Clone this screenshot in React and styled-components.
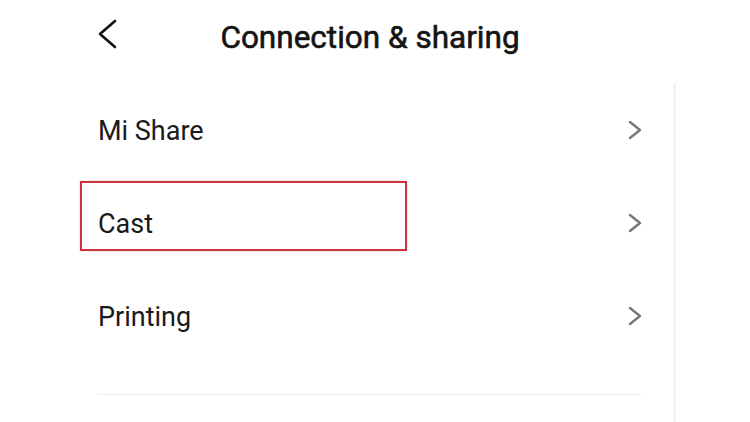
import React from 'react';
import styled, { createGlobalStyle } from 'styled-components';

const GlobalStyle = createGlobalStyle`
  html, body {
    margin: 0;
    padding: 0;
    background: #ffffff;
  }
  body {
    font-family: Roboto, "Noto Sans", "Liberation Sans", sans-serif;
    -webkit-font-smoothing: antialiased;
  }
`;

const Screen = styled('div')`
  width: 750px;
  height: 422px;
  overflow: hidden;
  background: #ffffff;
`;

const Header = styled('header')`
  width: 544px;
  height: 83px;
  margin-left: 98px;
  display: grid;
  grid-template-columns: 1fr auto 1fr;
  align-items: start;
`;

const BackButton = styled('button')`
  width: 24px;
  height: 32px;
  margin-top: 18px;
  padding: 0;
  border: none;
  background: none;
  display: flex;
  align-items: center;
  cursor: pointer;
`;

const Title = styled('h1')`
  margin: 0;
  padding-top: 19px;
  font-size: 31.5px;
  font-weight: 400;
  -webkit-text-stroke: 0.6px #141414;
  line-height: 38px;
  color: #141414;
  letter-spacing: 0;
`;

const Body = styled('div')`
  display: flex;
  align-items: stretch;
  height: 339px;
`;

const List = styled('ul')`
  width: 544px;
  margin: 0 0 0 98px;
  padding: 0;
  list-style: none;
`;

const Row = styled('li')`
  position: relative;
  height: 93px;
  display: flex;
  align-items: center;
  justify-content: space-between;
`;

const Label = styled('span')`
  font-size: 27px;
  font-weight: 400;
  color: #1a1a1a;
  position: relative;
  top: 1px;
`;

const Highlight = styled('div')`
  position: absolute;
  left: -18px;
  top: 5px;
  width: 323px;
  height: 66px;
  border: 2px solid #c8333f;
  box-shadow: 0 0 1px rgba(200, 51, 63, 0.5);
  pointer-events: none;
`;

const Divider = styled('li')`
  height: 1px;
  margin-top: 32px;
  background: #ececec;
`;

const SideRule = styled('div')`
  width: 3px;
  margin-left: 31px;
  background: #f2f2f2;
`;

const BackIcon = () => (
  <svg width="20" height="30" viewBox="0 0 20 30" fill="none">
    <polyline
      points="17,2 2,15 17,28"
      stroke="#111"
      strokeWidth="2.6"
      strokeLinecap="round"
      strokeLinejoin="round"
    />
  </svg>
);

const Chevron = () => (
  <svg width="14" height="20" viewBox="0 0 14 20" fill="none">
    <polyline
      points="2,2 12,10 2,18"
      stroke="#777"
      strokeWidth="2.4"
      strokeLinecap="round"
      strokeLinejoin="round"
    />
  </svg>
);

const items = [
  { label: 'Mi Share' },
  { label: 'Cast', highlighted: true },
  { label: 'Printing' },
];

const App = () => (
  <Screen>
    <GlobalStyle />
    <Header>
      <BackButton aria-label="Back">
        <BackIcon />
      </BackButton>
      <Title>Connection &amp; sharing</Title>
      <span />
    </Header>
    <Body>
      <List>
        {items.map((item) => (
          <Row key={item.label}>
            {item.highlighted && <Highlight />}
            <Label>{item.label}</Label>
            <Chevron />
          </Row>
        ))}
        <Divider />
      </List>
      <SideRule />
    </Body>
  </Screen>
);

export default App;
